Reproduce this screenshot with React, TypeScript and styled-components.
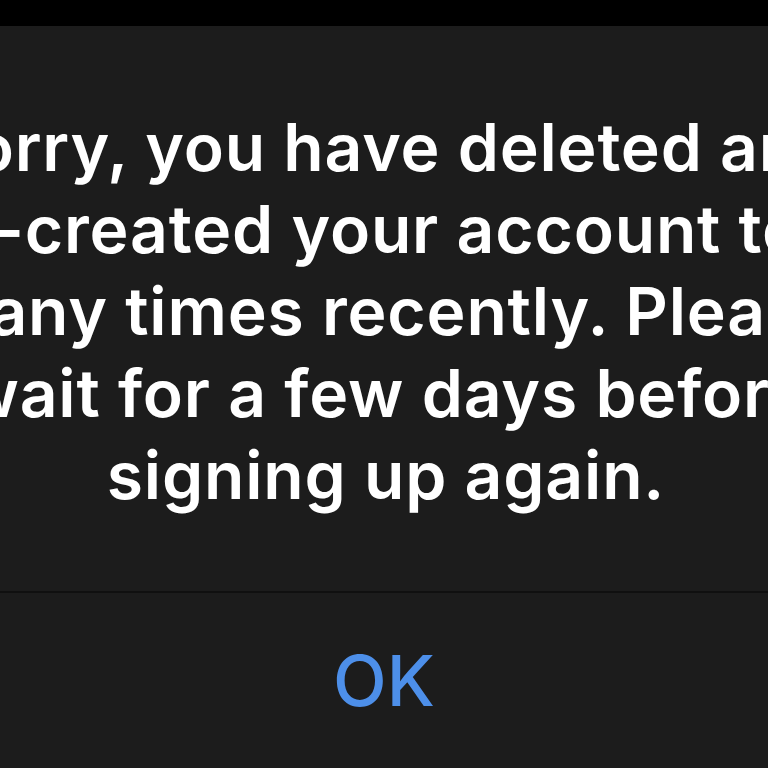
import React from "react";
import styled, { createGlobalStyle } from "styled-components";

const Global = createGlobalStyle`
  html, body {
    margin: 0;
    padding: 0;
    background: #1c1c1c;
    overflow: hidden;
  }
  body {
    font-family: Inter, "Noto Sans", "Liberation Sans", sans-serif;
  }
`;

const Screen = styled.div`
  width: 768px;
  height: 768px;
  display: flex;
  flex-direction: column;
  overflow: hidden;
  background: #1c1c1c;
`;

const StatusStrip = styled.div`
  height: 26px;
  flex: none;
  background: #000;
`;

const MessageArea = styled.div`
  flex: none;
  padding: 80px 0 75px 4px;
  display: flex;
  flex-direction: column;
  align-items: center;
`;

const Line = styled.div`
  white-space: nowrap;
  color: #ffffff;
  font-size: 66px;
  line-height: 82px;
  font-weight: 600;
  letter-spacing: 0.8px;
  text-align: center;
`;

const Divider = styled.div`
  height: 2px;
  flex: none;
  background: #101010;
`;

const ButtonArea = styled.div`
  flex: 1;
  display: flex;
  align-items: center;
  justify-content: center;
`;

const OkButton = styled.button`
  background: none;
  border: 0;
  padding: 0;
  margin: 0;
  font-family: inherit;
  color: #4d8fe9;
  font-size: 70px;
  line-height: 70px;
  font-weight: 500;
  cursor: pointer;
`;

const lines = [
  "Sorry, you have deleted and",
  "re-created your account too",
  "many times recently. Please",
  "wait for a few days before",
  "signing up again.",
];

export default function App() {
  return (
    <>
      <Global />
      <Screen>
        <StatusStrip />
        <MessageArea>
          {lines.map((l) => (
            <Line key={l}>{l}</Line>
          ))}
        </MessageArea>
        <Divider />
        <ButtonArea>
          <OkButton>OK</OkButton>
        </ButtonArea>
      </Screen>
    </>
  );
}
